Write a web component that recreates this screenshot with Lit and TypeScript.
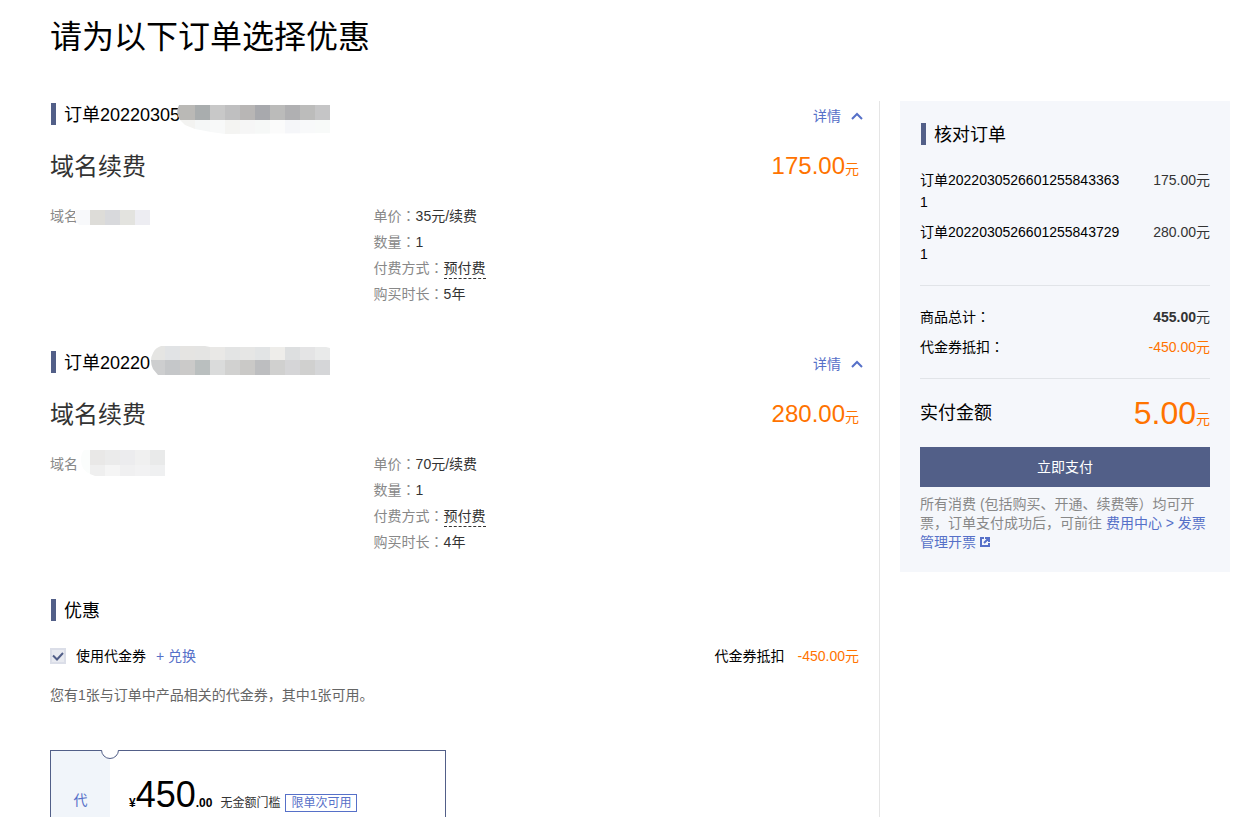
import { LitElement, html, svg, css } from "lit";
import { customElement, property, state } from "lit/decorators.js";

interface Mosaic {
  width: number;
  height: number;
  clip: string;
  cells: [number, number, number, number, string][];
}

interface Order {
  id: string;
  price: string;
  unit: string;
  years: string;
  idMask: Mosaic;
  domainMask: Mosaic;
}

/** Builds one row of 15px mosaic cells starting at x. */
const row = (x: number, y: number, h: number, colors: string[]) =>
  colors.map((c, i) => [x + i * 15, y, 15, h, c] as [number, number, number, number, string]);

const orders: Order[] = [
  {
    id: "20220305",
    price: "175.00",
    unit: "35元/续费",
    years: "5年",
    idMask: {
      width: 153,
      height: 29,
      clip: "M2 0H153V28L48 29L34 27L18 24L8 20L3 15Q-2 8 2 0Z",
      cells: [
        [0, 0, 3, 15, "#b7b7b8"],
        ...row(3, 0, 15, ["#bab9b6", "#a9adae", "#c8c8c8", "#bfbfc0", "#b8b6b5", "#a8a9ad", "#bbbbba", "#b0b0b2", "#bcbcbb", "#c5c5c6"]),
        ...row(3, 15, 14, ["#f3f3f1", "#f5f7f7", "#f8f9f9", "#f4f4f2", "#f6f6f6", "#f6f8f7", "#fbfbfb", "#f5f6f9", "#f8f9fa", "#f8faf9"]),
      ],
    },
    domainMask: {
      width: 75,
      height: 15,
      clip: "M0 0H75V15H4L0 10Z",
      cells: row(0, 0, 15, ["#f8f9fb", "#dddcd8", "#d8d9dc", "#e3e3df", "#ededf2"]),
    },
  },
  {
    id: "20220",
    price: "280.00",
    unit: "70元/续费",
    years: "4年",
    idMask: {
      width: 179,
      height: 29,
      clip: "M10 0H54L59 1H175L179 2V29H7L2 23Q-2 14 2 7Q4 2 10 0Z",
      cells: [
        ...row(-1, 0, 14, ["#e5e5e3", "#e1e3e5", "#e5e4e2", "#e4e4e3", "#e9e8e6", "#e3e4e4", "#e6e6e5", "#e2e4e5", "#eeedea", "#dddfe0", "#e4e4e5", "#e9eaea"]),
        ...row(-1, 14, 15, ["#cdcecf", "#c5c7c9", "#cbcac9", "#babfbf", "#dadbdb", "#d1d1d0", "#cac9c7", "#bdbec0", "#d0d0cf", "#d5d5d7", "#d0d0cf", "#d5d6d8"]),
      ],
    },
    domainMask: {
      width: 84,
      height: 26,
      clip: "M3 0H84V26H14L9 24Q0 20 0 10Q0 3 3 0Z",
      cells: [
        [0, 0, 9, 26, "#fbfdfc"],
        ...row(9, 0, 15, ["#e9e8e7", "#ebebeb", "#ececee", "#f0f0f0", "#e9eaea"]),
        ...row(9, 15, 11, ["#efefef", "#f5f5f5", "#f0f0f1", "#f2f2f3", "#eff0f1"]),
      ],
    },
  },
];

const shared = css`
  * {
    box-sizing: border-box;
  }
  button {
    font: inherit;
    border: 0;
    padding: 0;
    background: none;
    cursor: pointer;
  }
  a {
    color: #5670c8;
    text-decoration: none;
  }
  .heading {
    display: flex;
    align-items: center;
    margin: 0 0 0 1px;
    height: 22px;
    padding: 2px 0 0 8px;
    border-left: 5px solid #525f88;
    font-size: 18px;
    line-height: 20px;
    font-weight: 400;
    color: #000;
  }
  .colon {
    font-family: "Noto Sans CJK TC", sans-serif;
    line-height: 1;
  }
`;

const colon = html`<span class="colon">：</span>`;

let maskCount = 0;

@customElement("mosaic-mask")
class MosaicMask extends LitElement {
  @property({ attribute: false }) mosaic!: Mosaic;
  private clipId = `mask-${++maskCount}`;

  static styles = css`
    svg {
      display: block;
    }
  `;

  render() {
    const m = this.mosaic;
    return html`<svg width=${m.width} height=${m.height} shape-rendering="crispEdges" aria-hidden="true">
      <clipPath id=${this.clipId}><path d=${m.clip} /></clipPath>
      <g clip-path="url(#${this.clipId})">
        ${m.cells.map(([x, y, w, h, c]) => svg`<rect x=${x} y=${y} width=${w} height=${h} fill=${c} />`)}
      </g>
    </svg>`;
  }
}

@customElement("order-item")
class OrderItem extends LitElement {
  @property({ attribute: false }) order!: Order;
  @property({ type: Boolean, reflect: true }) second = false;
  @state() private open = true;

  static styles = [
    shared,
    css`
      :host {
        display: block;
        margin-bottom: 44px;
      }
      .top,
      .product {
        display: flex;
        justify-content: space-between;
        align-items: center;
      }
      .top {
        height: 22px;
      }
      .heading,
      .domain {
        position: relative;
      }
      mosaic-mask {
        position: absolute;
        left: 121px;
        top: 2px;
      }
      .domain mosaic-mask {
        left: 25px;
        top: 7px;
      }
      :host([second]) mosaic-mask {
        left: 95px;
        top: -5px;
      }
      :host([second]) .domain mosaic-mask {
        left: 31px;
        top: -1px;
      }
      .toggle {
        display: flex;
        align-items: center;
        gap: 10px;
        margin-right: -4px;
        padding-top: 4px;
        line-height: 22px;
        color: #5670c8;
      }
      .closed svg {
        transform: rotate(180deg);
      }
      .product {
        height: 40px;
        margin: 22px 0 16px;
        line-height: 40px;
      }
      .name {
        margin: 0;
        font-size: 24px;
        font-weight: 400;
        color: #333;
      }
      .price {
        color: #ff7300;
      }
      .price b {
        font-size: 24px;
        font-weight: 400;
      }
      .info {
        display: grid;
        grid-template-columns: 40% 1fr;
        line-height: 26px;
        color: #888;
      }
      .info dl,
      .info dd {
        margin: 0;
      }
      .info dl > div {
        display: flex;
        height: 26px;
      }
      dd {
        color: #333;
      }
      .dashed {
        line-height: 20px;
        margin: 3px 0 2px;
        border-bottom: 1px dashed #333;
      }
    `,
  ];

  render() {
    const o = this.order;
    return html`
      <div class="top">
        <h2 class="heading">订单${o.id}<mosaic-mask .mosaic=${o.idMask}></mosaic-mask></h2>
        <button
          class="toggle ${this.open ? "" : "closed"}"
          aria-expanded=${this.open}
          @click=${() => (this.open = !this.open)}
        >
          详情
          <svg width="12" height="8" viewBox="0 0 12 8" fill="none" stroke="#5670c8" stroke-width="2">
            <path d="M1 7L6 2L11 7" />
          </svg>
        </button>
      </div>
      <div class="product">
        <h3 class="name">域名续费</h3>
        <span class="price"><b>${o.price}</b>元</span>
      </div>
      ${this.open
        ? html`<div class="info">
            <div class="domain">域名<mosaic-mask .mosaic=${o.domainMask}></mosaic-mask></div>
            <dl>
              <div><dt>单价${colon}</dt><dd>${o.unit}</dd></div>
              <div><dt>数量${colon}</dt><dd>1</dd></div>
              <div><dt>付费方式${colon}</dt><dd><div class="dashed">预付费</div></dd></div>
              <div><dt>购买时长${colon}</dt><dd>${o.years}</dd></div>
            </dl>
          </div>`
        : ""}
    `;
  }
}

@customElement("coupon-card")
class CouponCard extends LitElement {
  static styles = [
    shared,
    css`
      :host {
        position: relative;
        display: grid;
        grid-template-columns: 59px 1fr;
        width: 396px;
        max-width: 100%;
        border: 1px solid #525f88;
        border-bottom: 0;
      }
      .kind {
        padding-top: 38px;
        text-align: center;
        line-height: 22px;
        color: #5670c8;
        background: #f1f5fa;
      }
      .notch {
        position: absolute;
        left: 50px;
        top: -1px;
      }
      .value {
        display: flex;
        align-items: baseline;
        height: 60px;
        padding: 22px 0 0 19px;
        font-size: 12px;
        line-height: 44px;
        color: #333;
        white-space: nowrap;
      }
      .value b {
        font-weight: 700;
        color: #000;
      }
      .amount {
        font-size: 36px;
        color: #000;
      }
      .rule {
        margin: 0 5px 0 8px;
      }
      .tag {
        padding: 0 5px;
        border: 1px solid #5670c8;
        line-height: 16px;
        color: #5670c8;
      }
    `,
  ];

  render() {
    return html`
      <div class="kind">代</div>
      <div class="value">
        <b>¥</b><span class="amount">450</span><b>.00</b>
        <span class="rule">无金额门槛</span>
        <span class="tag">限单次可用</span>
      </div>
      <svg class="notch" width="18" height="10" viewBox="0 0 18 10" aria-hidden="true">
        <path d="M0 0H18A9 9 0 0 1 0 0Z" fill="#fff" />
        <path d="M0.5 0A8.5 8.5 0 0 0 17.5 0" fill="none" stroke="#525f88" />
      </svg>
    `;
  }
}

@customElement("order-summary")
class OrderSummary extends LitElement {
  static styles = [
    shared,
    css`
      :host {
        display: block;
        padding: 22px 20px 20px;
        background: #f5f7fb;
        line-height: 22px;
        color: #333;
      }
      .group {
        display: flex;
        flex-direction: column;
        gap: 8px;
        padding-bottom: 20px;
        border-bottom: 1px solid #e1e4e8;
      }
      .orders {
        margin-top: 24px;
      }
      .totals {
        padding-top: 20px;
      }
      .line {
        display: flex;
        justify-content: space-between;
      }
      .label {
        max-width: 70%;
        color: #000;
        word-break: break-all;
      }
      .orange {
        color: #ff7300;
      }
      .due {
        display: flex;
        justify-content: space-between;
        align-items: center;
        height: 68px;
      }
      .due .label {
        font-size: 18px;
      }
      .due b {
        font-size: 32px;
        font-weight: 400;
      }
      .due .orange {
        line-height: 40px;
        padding-top: 6px;
      }
      .pay {
        display: block;
        width: 100%;
        height: 40px;
        background: #525f88;
        color: #fff;
      }
      .note {
        margin: 8px 0 0;
        line-height: 19px;
        color: #888;
      }
    `,
  ];

  render() {
    return html`
      <h2 class="heading">核对订单</h2>
      <div class="group orders">
        <div class="line"><span class="label">订单2022030526601255843363<wbr />1</span><span>175.00元</span></div>
        <div class="line"><span class="label">订单2022030526601255843729<wbr />1</span><span>280.00元</span></div>
      </div>
      <div class="group totals">
        <div class="line"><span class="label">商品总计${colon}</span><span><b>455.00</b>元</span></div>
        <div class="line"><span class="label">代金券抵扣${colon}</span><span class="orange">-450.00元</span></div>
      </div>
      <div class="due">
        <span class="label">实付金额</span>
        <span class="orange"><b>5.00</b>元</span>
      </div>
      <button class="pay">立即支付</button>
      <p class="note">
        所有消费 (包括购买、开通、续费等）均可开票，订单支付成功后，可前往
        <a href="#invoice"
          >费用中心 &gt; 发票管理开票
          <svg width="10" height="10" viewBox="0 0 10 10" fill="none" stroke="#5670c8" stroke-width="2">
            <path d="M4 1H1V9H9V6M4 6L8 2M5 1H9V5" />
          </svg></a
        >
      </p>
    `;
  }
}

@customElement("app-root")
class AppRoot extends LitElement {
  @state() private useCoupon = true;

  static styles = [
    shared,
    css`
      :host {
        display: flex;
        flex-direction: column;
        height: 100vh;
        overflow: hidden;
        padding: 0 17px 0 50px;
        background: #fff;
        font-family: "Liberation Sans", "Noto Sans CJK SC", sans-serif;
        font-size: 14px;
        color: #333;
      }
      .title {
        margin: 13px 0 40px;
        font-size: 32px;
        line-height: 48px;
        font-weight: 400;
        color: #000;
      }
      .columns {
        flex: 1;
        display: flex;
        gap: 20px;
        min-height: 0;
      }
      .main {
        flex: 1;
        display: flex;
        flex-direction: column;
        padding: 2px 20px 0 0;
        border-right: 1px solid #e5e5e5;
      }
      order-summary {
        flex: 0 0 330px;
        align-self: flex-start;
      }
      .discount {
        display: flex;
        align-items: center;
        margin-top: 24px;
        line-height: 22px;
        color: #000;
      }
      .check {
        display: flex;
        align-items: center;
        gap: 10px;
      }
      .box {
        display: grid;
      }
      .box > * {
        grid-area: 1 / 1;
      }
      .box input {
        appearance: none;
        width: 16px;
        height: 16px;
        margin: 0;
        border: 2px solid #dbdee8;
        background: #e8eaf0;
      }
      .box svg {
        pointer-events: none;
      }
      .redeem {
        margin-left: 10px;
      }
      .deduct {
        margin-left: auto;
      }
      .off {
        margin-left: 13px;
        color: #ff7300;
      }
      .tip {
        margin: 17px 0 44px;
        line-height: 22px;
        color: #666;
      }
      coupon-card {
        flex: 1;
      }
    `,
  ];

  render() {
    return html`
      <h1 class="title">请为以下订单选择优惠</h1>
      <div class="columns">
        <main class="main">
          ${orders.map((o, i) => html`<order-item .order=${o} ?second=${i === 1}></order-item>`)}
          <h2 class="heading">优惠</h2>
          <div class="discount">
            <label class="check">
              <span class="box">
                <input
                  type="checkbox"
                  .checked=${this.useCoupon}
                  @change=${(e: Event) => (this.useCoupon = (e.target as HTMLInputElement).checked)}
                />
                ${this.useCoupon
                  ? html`<svg width="16" height="16" viewBox="0 0 16 16" fill="none" stroke="#525f88" stroke-width="2">
                      <path d="M3 7.5L7 11.5L13 5" />
                    </svg>`
                  : ""}
              </span>
              使用代金券
            </label>
            <a class="redeem" href="#redeem">+ 兑换</a>
            <span class="deduct">代金券抵扣</span>
            <span class="off">-450.00元</span>
          </div>
          <p class="tip">您有1张与订单中产品相关的代金券，其中1张可用。</p>
          <coupon-card></coupon-card>
        </main>
        <order-summary></order-summary>
      </div>
    `;
  }
}
